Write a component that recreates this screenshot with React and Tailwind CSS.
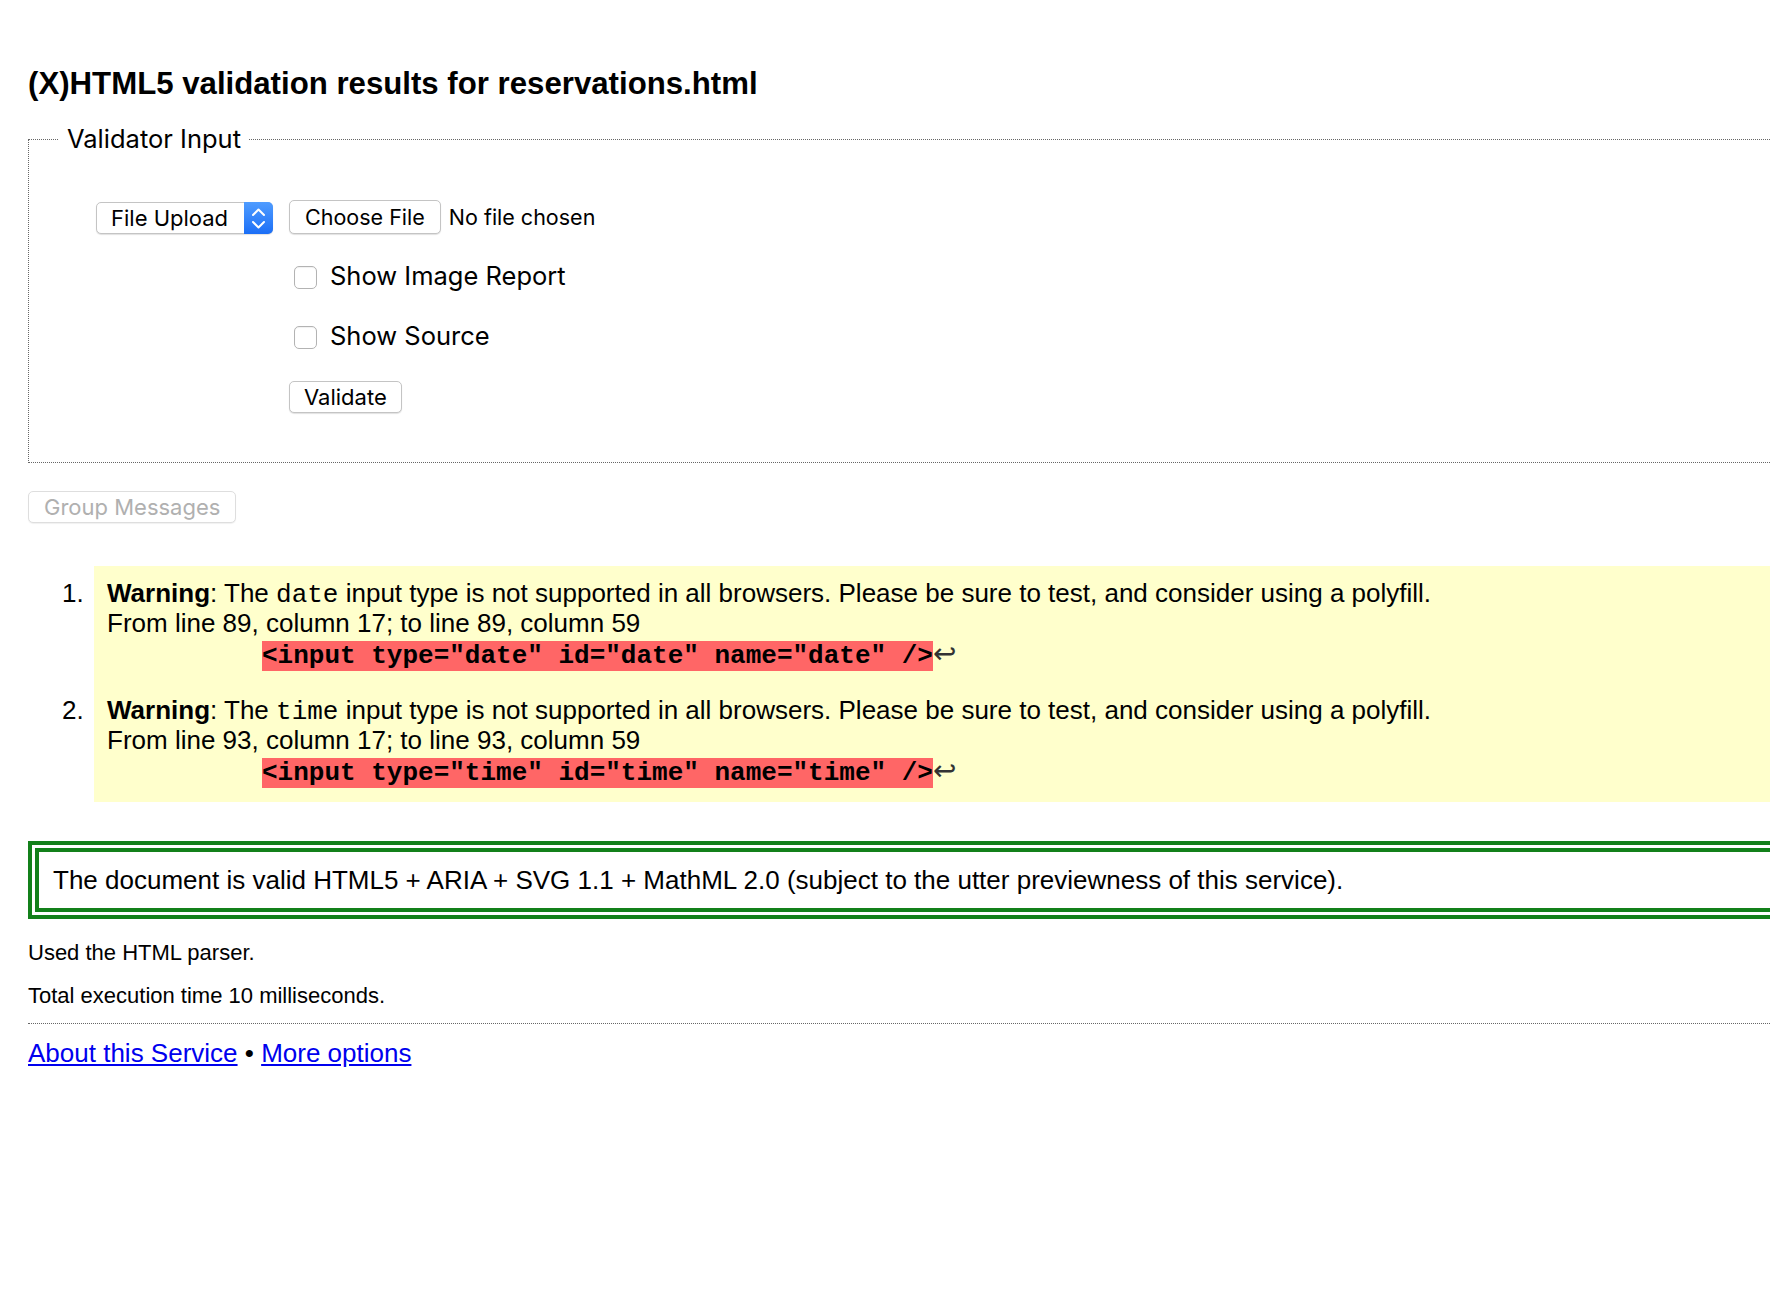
import React from "react";

function SelectBox() {
  return (
    <div className="flex h-[32px] w-[177px] items-stretch rounded-[5px] border border-[#c4c4c4] bg-white shadow-[0_1px_1px_rgba(0,0,0,0.12)]">
      <span className="flex flex-1 items-center pl-[14px] text-[22px] text-black">File Upload</span>
      <span className="flex w-[29px] items-center justify-center rounded-r-[5px] bg-gradient-to-b from-[#4f9cff] to-[#1b6ef6] -my-px -mr-px">
        <svg width="29" height="32" viewBox="0 0 29 32" fill="none">
          <path d="M9 13 L14.5 7.5 L20 13" stroke="white" strokeWidth="2" strokeLinecap="round" strokeLinejoin="round" />
          <path d="M9 20 L14.5 25.5 L20 20" stroke="white" strokeWidth="2" strokeLinecap="round" strokeLinejoin="round" />
        </svg>
      </span>
    </div>
  );
}

function CheckRow({ label, className }) {
  return (
    <label className={"flex h-[30px] items-start " + className}>
      <span className="ml-[5px] mt-[5px] block h-[23px] w-[23px] rounded-[5px] border border-[#b3b3b3] bg-white shadow-[inset_0_1px_1px_rgba(0,0,0,0.06)]" />
      <span className="ml-[13px] text-[25.5px] leading-[30px]">{label}</span>
    </label>
  );
}

function Message({ num, type, line }) {
  return (
    <li className="text-[26px] leading-[30px]">
      <p>
        <span className="-ml-[45px] inline-block w-[45px]">{num}.</span>
        <strong className="font-bold">Warning</strong>: The{" "}
        <code className="font-['Liberation_Mono',monospace] text-[26px] leading-[20px]">{type}</code> input type is not
        supported in all browsers. Please be sure to test, and consider using a polyfill.
      </p>
      <p>
        From line {line}, column 17; to line {line}, column 59
      </p>
      <p className="h-[32px] pl-[155px] leading-[32px]">
        <code className="bg-[#ff6666] font-['Liberation_Mono',monospace] text-[26px] font-bold leading-[20px] whitespace-pre">
          {`<input type="${type}" id="${type}" name="${type}" />`}
        </code>
        <span className="font-['DejaVu_Sans',sans-serif] text-[28px] leading-[20px] text-[#333]">↩</span>
      </p>
    </li>
  );
}

export default function App() {
  return (
    <div className="min-h-screen w-full overflow-hidden bg-white text-black">
      <div className="w-[1800px] pl-[28px] font-['Liberation_Sans',Arial,sans-serif]">
        {/* Heading */}
        <h1 className="mt-[66px] text-[31.2px] font-bold leading-[36px]">
          (X)HTML5 validation results for reservations.html
        </h1>

        {/* Validator input form */}
        <fieldset className="mt-[22px] border border-dotted border-[#666] font-['Inter',sans-serif]">
          <legend className="ml-[30px] px-[8px] text-[25.5px] leading-[30px]">Validator Input</legend>
          <div className="flex pb-[49px] pl-[67px] pt-[46px]">
            <div className="w-[193px] pt-[2px]">
              <SelectBox />
            </div>
            <div className="flex flex-col">
              <div className="flex h-[34px] items-center">
                <button className="flex h-[34px] items-center rounded-[5px] border border-[#c4c4c4] bg-white px-[15px] text-[21.5px] shadow-[0_1px_1px_rgba(0,0,0,0.12)]">
                  Choose File
                </button>
                <span className="ml-[8px] text-[21.5px]">No file chosen</span>
              </div>
              <CheckRow label="Show Image Report" className="mt-[27px]" />
              <CheckRow label="Show Source" className="mt-[30px]" />
              <div className="mt-[30px]">
                <button className="flex h-[32px] items-center rounded-[5px] border border-[#c4c4c4] bg-white px-[14px] text-[22px] shadow-[0_1px_1px_rgba(0,0,0,0.12)]">
                  Validate
                </button>
              </div>
            </div>
          </div>
        </fieldset>

        <button
          disabled
          className="mt-[28px] flex h-[32px] items-center whitespace-nowrap rounded-[5px] border border-[#dedede] bg-white px-[15px] font-['Inter',sans-serif] text-[22px] text-[#b0b0b0] shadow-[0_1px_1px_rgba(0,0,0,0.06)]"
        >
          Group Messages
        </button>

        {/* Messages */}
        <ol className="ml-[66px] mt-[43px] flex flex-col gap-[25px] bg-[#ffffcc] pb-[15px] pl-[13px] pt-[12px]">
          <Message num={1} type="date" line={89} />
          <Message num={2} type="time" line={93} />
        </ol>

        {/* Success box */}
        <div className="mt-[39px] border-[11px] border-double border-[#13801a] py-[13px] pl-[14px] text-[26px] leading-[30px]">
          The document is valid HTML5 + ARIA + SVG 1.1 + MathML 2.0 (subject to the utter previewness of this service).
        </div>

        <p className="mt-[21px] text-[22px] leading-[26px]">Used the HTML parser.</p>
        <p className="mt-[17px] text-[22px] leading-[26px]">Total execution time 10 milliseconds.</p>

        <div className="mt-[14px] border-t border-dotted border-[#666]" />

        <p className="mt-[14px] text-[26px] leading-[30px]">
          <a href="#" className="text-[#0000ee] underline">About this Service</a> •{" "}
          <a href="#" className="text-[#0000ee] underline">More options</a>
        </p>
      </div>
    </div>
  );
}
